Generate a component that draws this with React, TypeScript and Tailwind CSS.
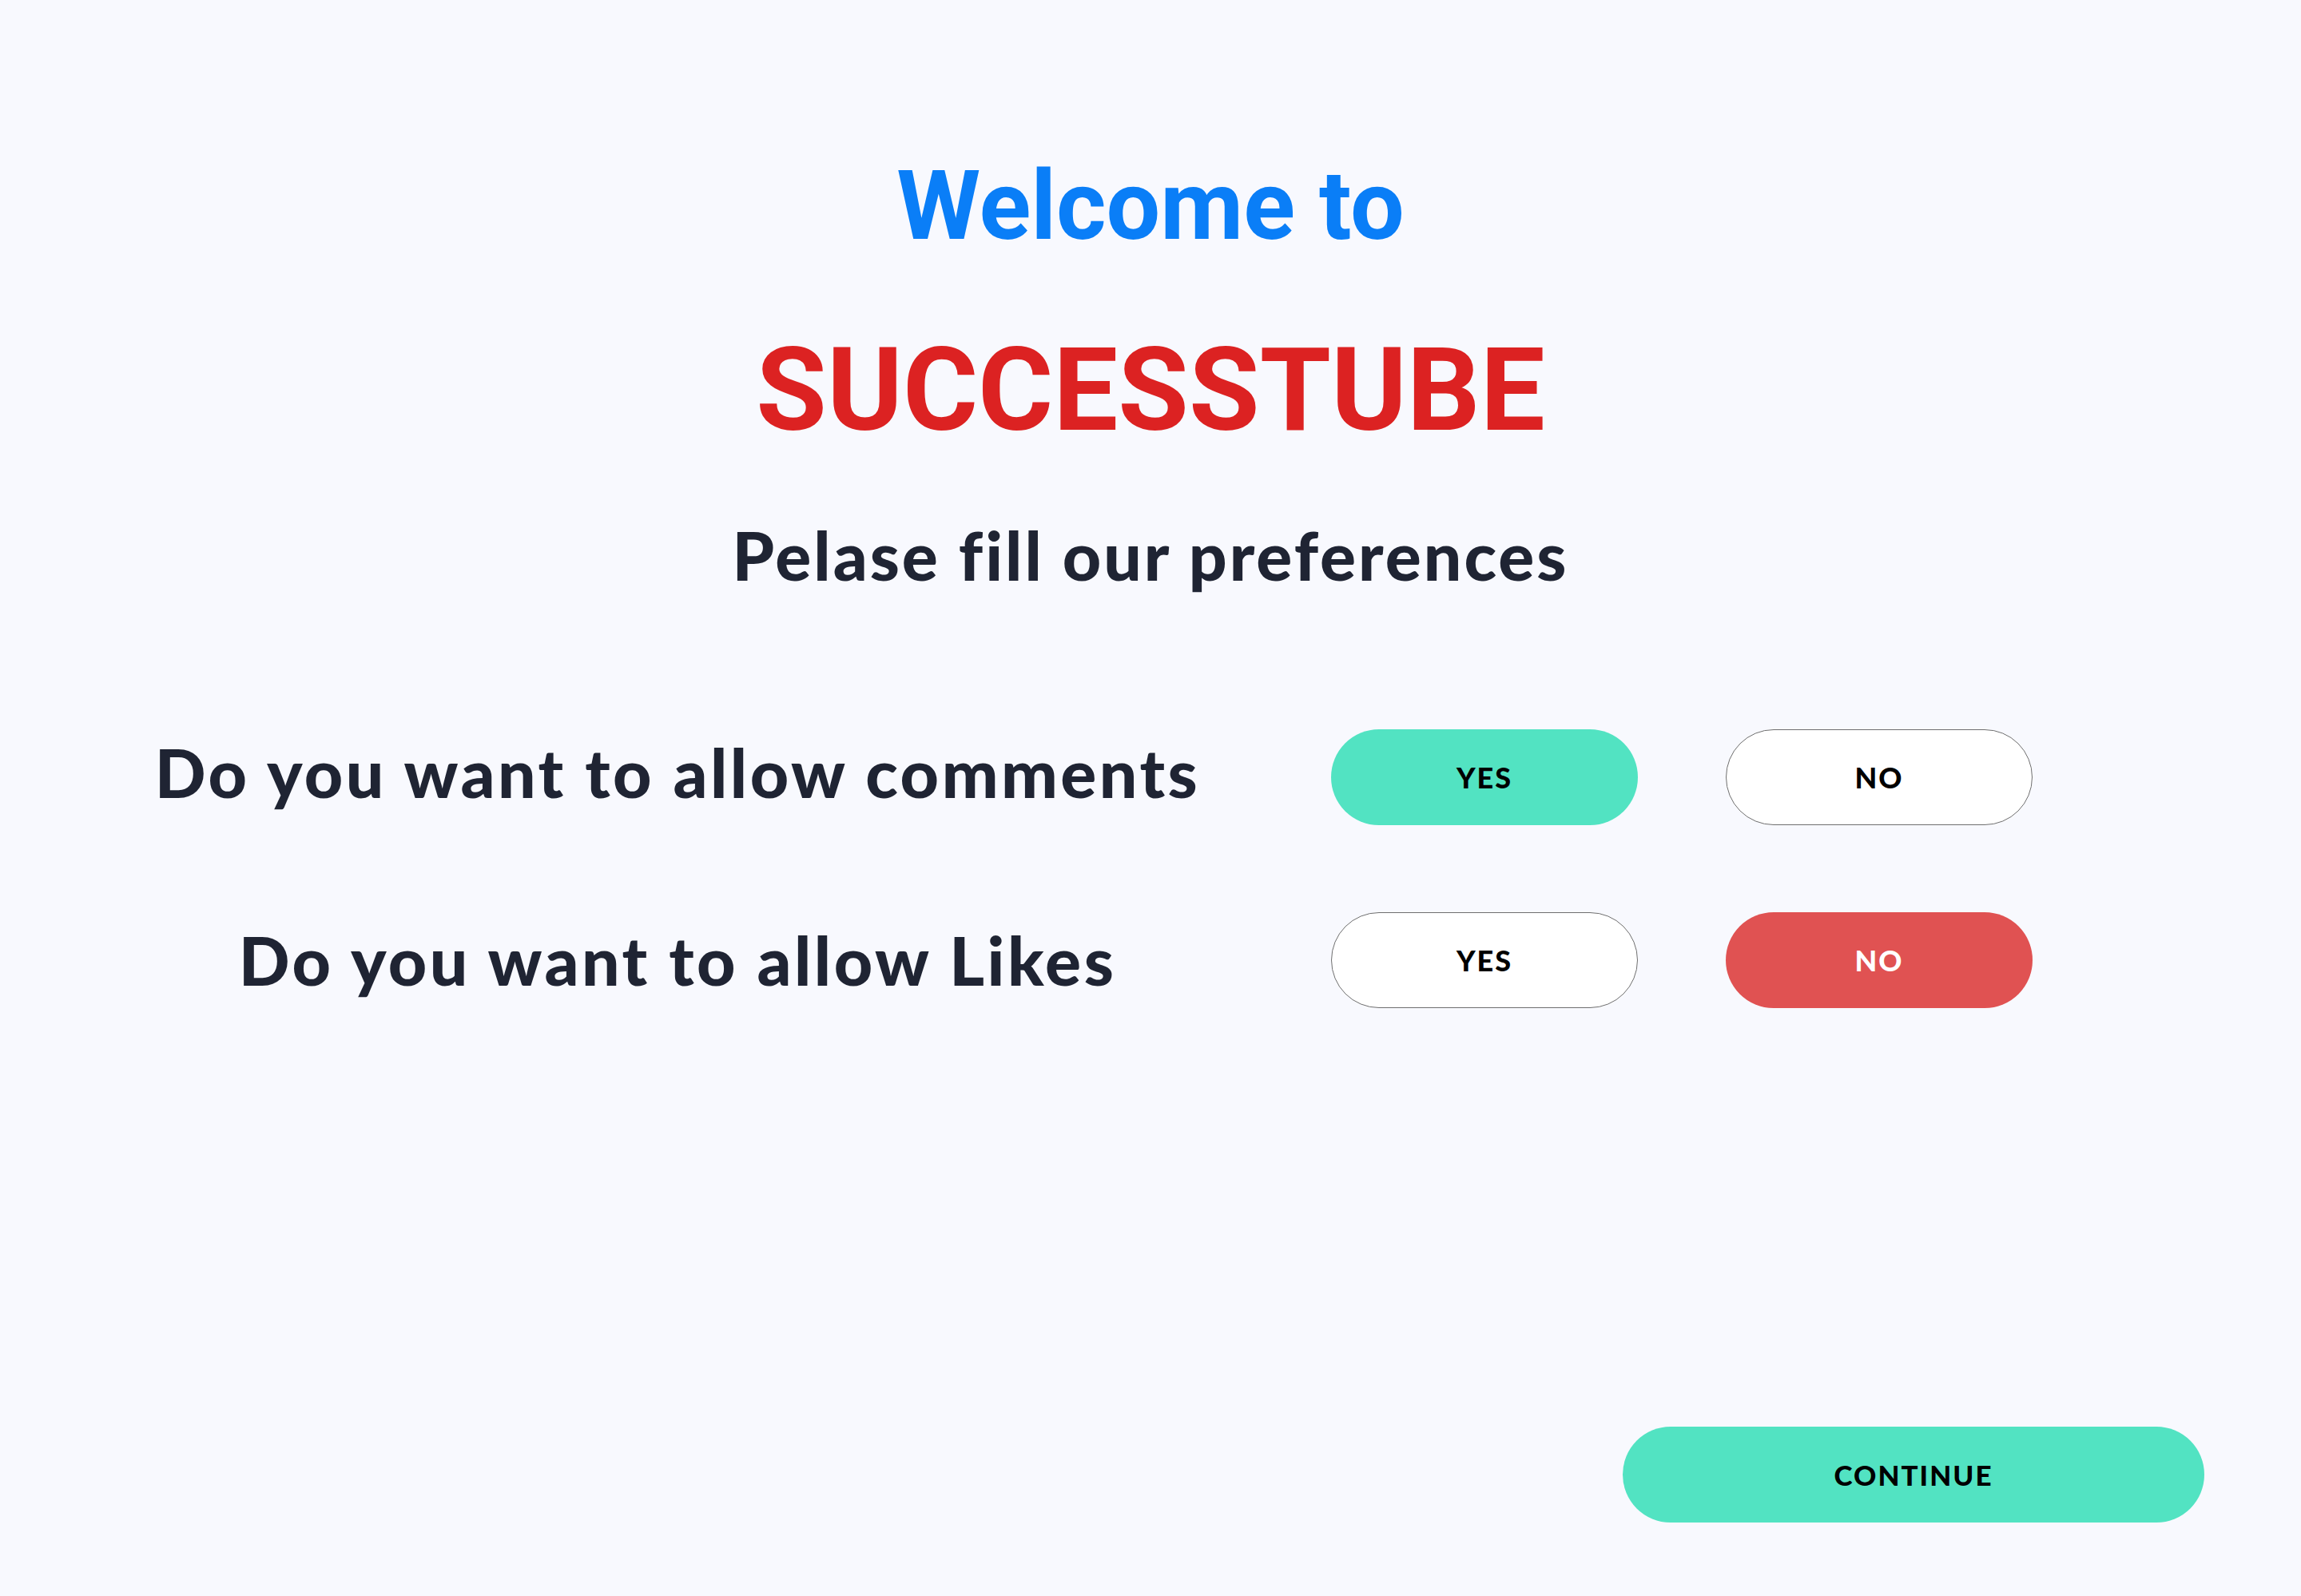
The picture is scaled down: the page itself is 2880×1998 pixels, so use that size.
import { useState } from "react";

type Choice = "yes" | "no";

const LATO = "font-['Lato','Noto_Sans',sans-serif]";

function ChoiceButton({
  label,
  active,
  tone,
  onClick,
}: {
  label: string;
  active: boolean;
  tone: "green" | "red";
  onClick: () => void;
}) {
  // selected = filled pill, other = white pill with a thin grey outline
  const filled = tone === "green" ? "bg-[#52e3c2] text-black" : "bg-[#e05252] text-white";
  return (
    <button
      onClick={onClick}
      className={`flex h-[120px] w-[384px] items-center justify-center rounded-full text-[36px] font-black leading-none tracking-[2px] ${LATO} ${
        active ? filled : "border border-[#6f6f6f] bg-white text-black"
      }`}
    >
      {label}
    </button>
  );
}

function PreferenceRow({
  question,
  value,
  onChange,
  textClass,
}: {
  question: string;
  value: Choice;
  onChange: (v: Choice) => void;
  textClass?: string;
}) {
  return (
    <div className="flex h-[120px] items-center">
      <div className={`ml-[100px] w-[1496px] text-center ${textClass ?? ""}`}>
        <span className={`text-[84px] font-black leading-none tracking-[3.5px] text-[#1f2433] ${LATO}`}>
          {question}
        </span>
      </div>
      <div className="ml-[70px] flex gap-[110px]">
        <ChoiceButton label="YES" tone="green" active={value === "yes"} onClick={() => onChange("yes")} />
        <ChoiceButton label="NO" tone="red" active={value === "no"} onClick={() => onChange("no")} />
      </div>
    </div>
  );
}

export default function App() {
  const [comments, setComments] = useState<Choice>("yes");
  const [likes, setLikes] = useState<Choice>("no");

  return (
    <div className="flex min-h-screen flex-col bg-[#f8f9fe]">
      {/* header */}
      <h1 className="pt-[198px] text-center font-['Roboto',sans-serif] text-[120px] font-bold leading-none text-[#0a7ef7]">
        Welcome to
      </h1>
      <h2 className="mt-[99px] text-center font-['Roboto',sans-serif] text-[144px] font-bold leading-none text-[#dc2222]">
        SUCCESSTUBE
      </h2>
      <p className={`mt-[92px] text-center text-[84px] font-black leading-none tracking-[3px] text-[#1f2433] ${LATO}`}>
        Pelase fill our preferences
      </p>

      {/* preference rows */}
      <div className="mt-[176px] flex flex-col gap-[109px]">
        <PreferenceRow
          question="Do you want to allow comments"
          value={comments}
          onChange={setComments}
          textClass="pb-[12px]"
        />
        <PreferenceRow question="Do you want to allow Likes" value={likes} onChange={setLikes} />
      </div>

      {/* continue */}
      <div className="mt-auto flex justify-end pb-[92px] pr-[121px]">
        <button
          className={`flex h-[120px] w-[728px] items-center justify-center rounded-full bg-[#52e3c2] text-[35px] font-black leading-none tracking-[2px] text-black ${LATO}`}
        >
          CONTINUE
        </button>
      </div>
    </div>
  );
}
